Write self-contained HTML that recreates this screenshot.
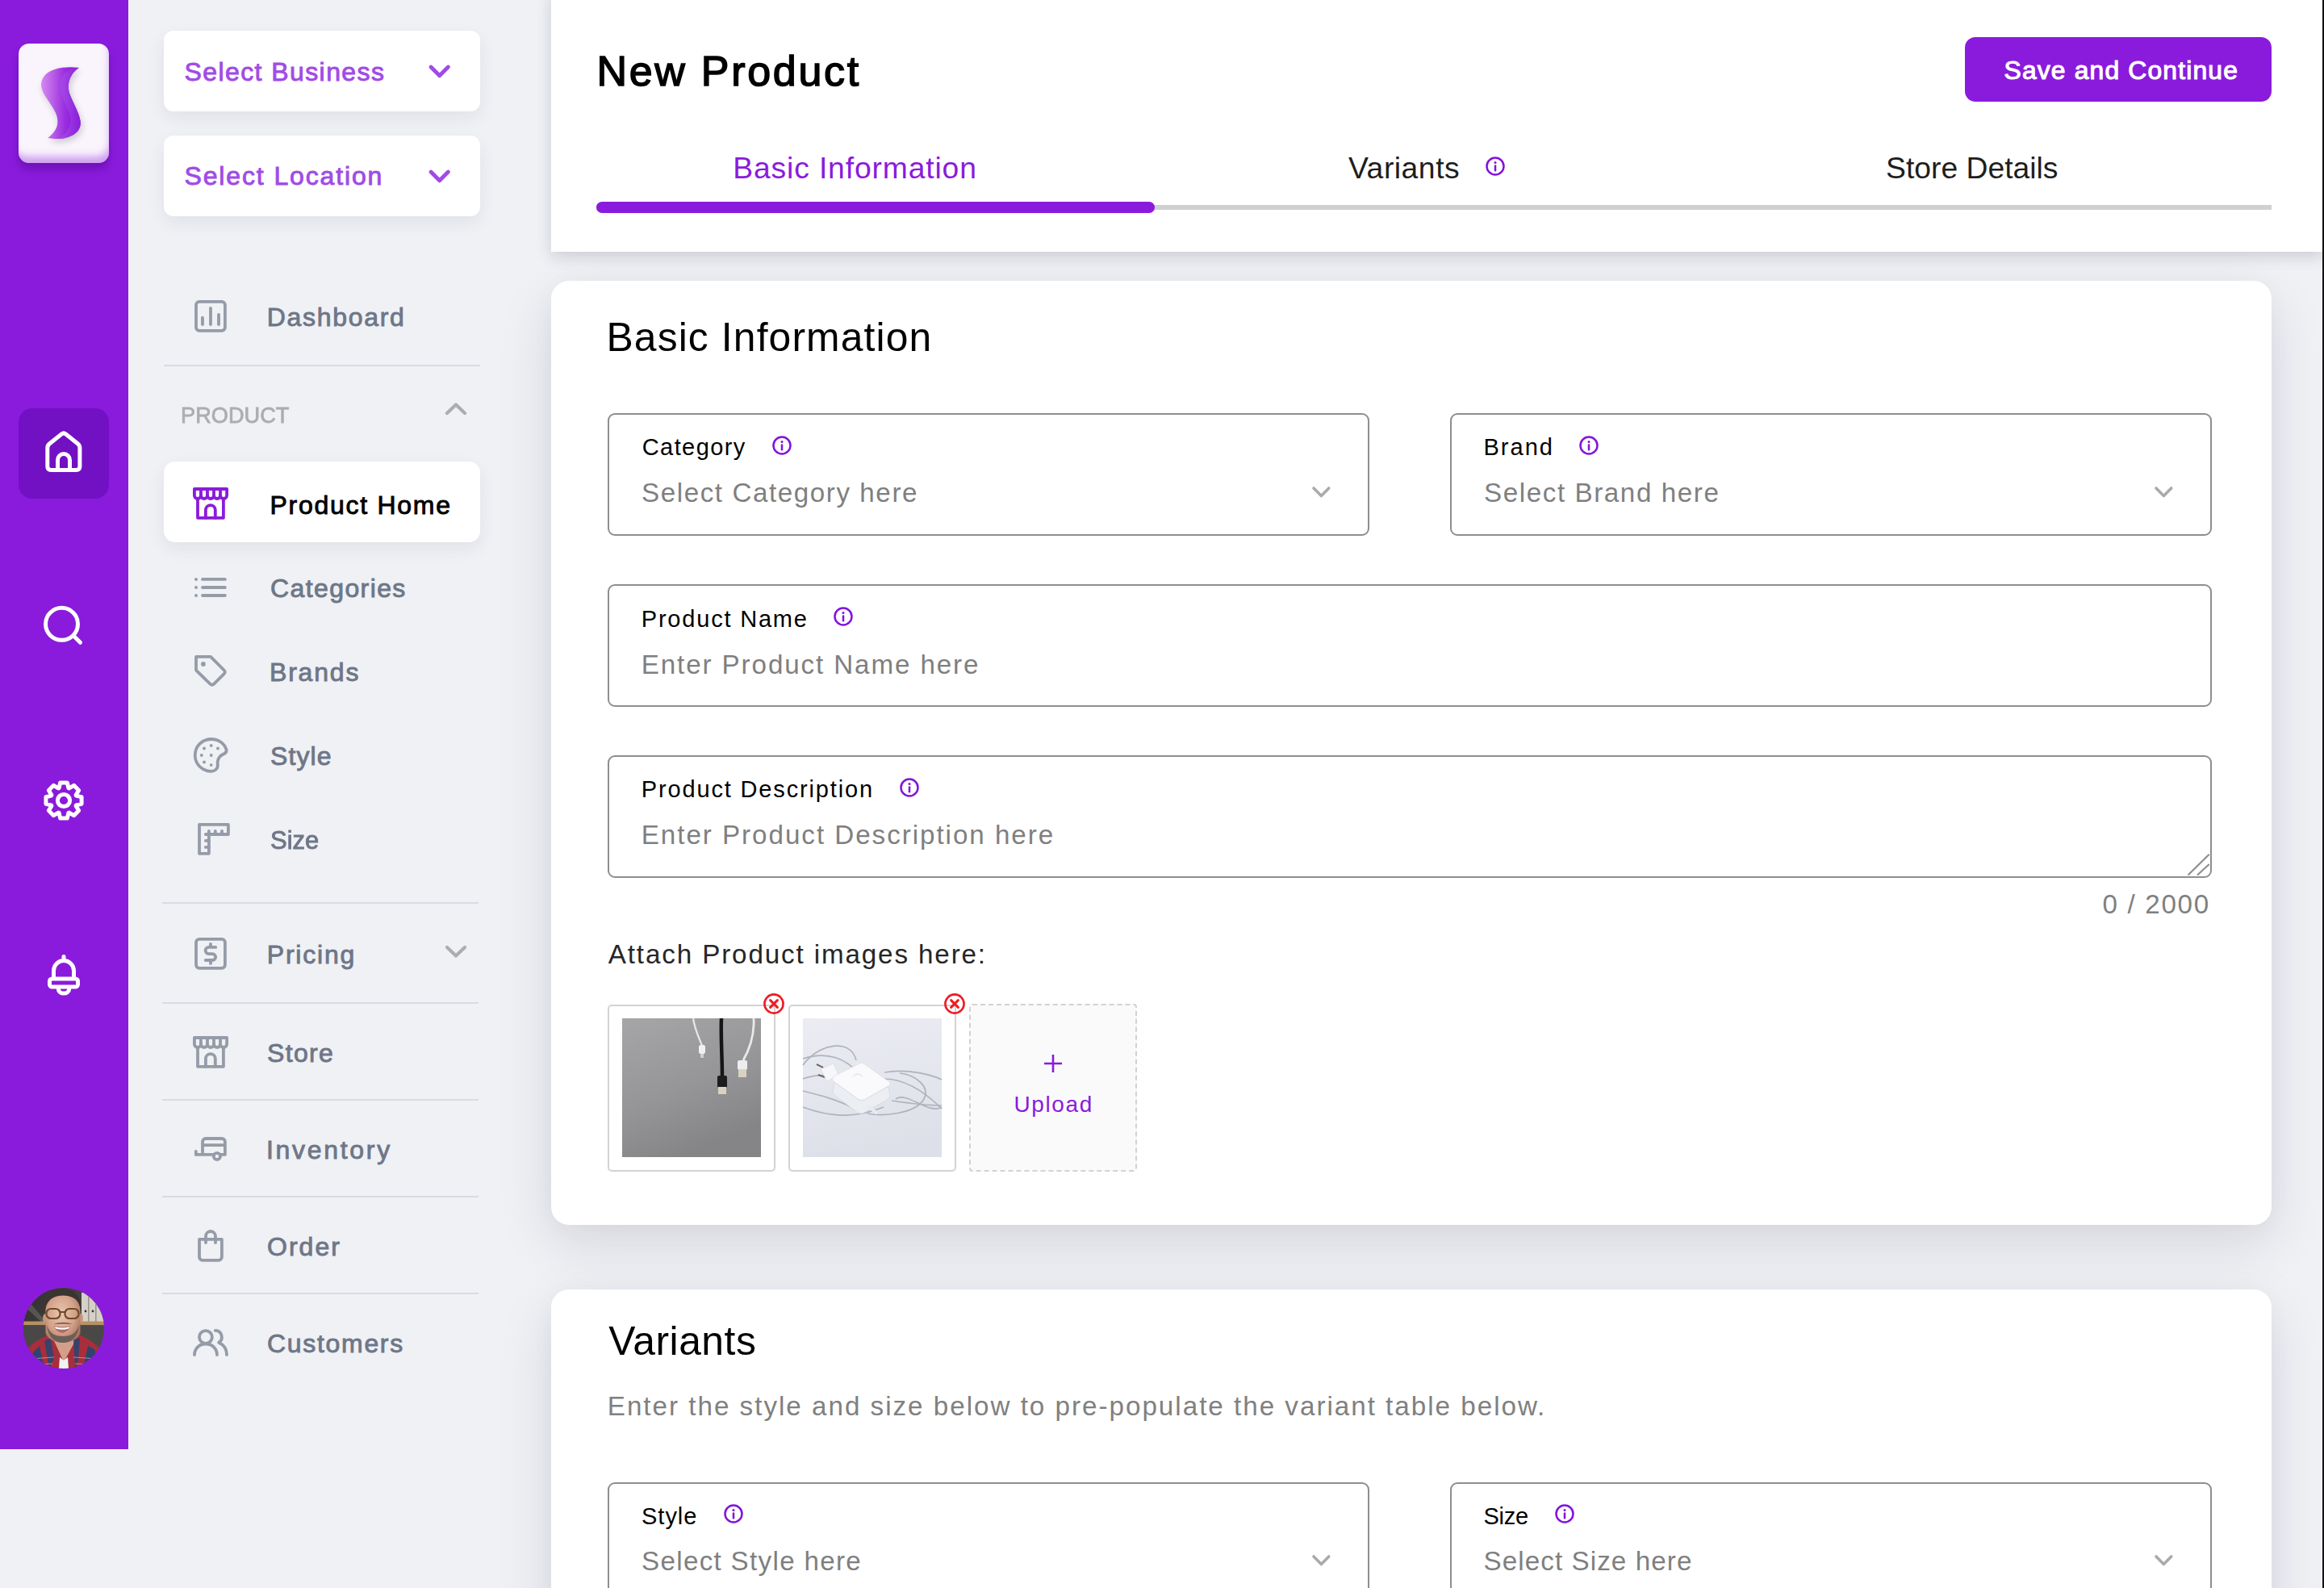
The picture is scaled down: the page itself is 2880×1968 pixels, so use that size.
<!DOCTYPE html><html><head><meta charset="utf-8"><style>
html,body{margin:0;padding:0;}
body{width:2880px;height:1968px;overflow:hidden;background:#F0F1F5;position:relative;font-family:"Liberation Sans",sans-serif;}
.t{position:absolute;white-space:nowrap;font-family:"Liberation Sans",sans-serif;}
.ic{position:absolute;overflow:visible;}
.b{position:absolute;box-sizing:border-box;}
.fld{position:absolute;box-sizing:border-box;border:2px solid #8E8E8E;border-radius:9px;background:#fff;}
.div{position:absolute;height:2px;background:#D9DBE2;}
</style></head><body>
<div class="b" style="left:683px;top:348px;width:2132px;height:1170px;background:#fff;border-radius:22px;box-shadow:0 24px 70px rgba(20,20,50,0.11), 0 4px 30px rgba(20,20,50,0.03)"></div>
<div class="b" style="left:683px;top:1598px;width:2132px;height:600px;background:#fff;border-radius:22px;box-shadow:0 24px 70px rgba(20,20,50,0.11), 0 4px 30px rgba(20,20,50,0.03)"></div>
<div class="b" style="left:683px;top:-10px;width:2196px;height:322px;background:#fff;box-shadow:0 6px 18px rgba(20,20,40,0.16)"></div>
<div class="b" style="left:2878px;top:0;width:2px;height:1968px;background:#111"></div>
<div class="b" style="left:739px;top:254px;width:2076px;height:6px;background:#D0D0D0"></div>
<div class="b" style="left:739px;top:250px;width:692px;height:14px;background:#8A1BDC;border-radius:7px"></div>
<svg class="ic" style="left:1840px;top:193px" width="26" height="26" viewBox="0 0 26 26" fill="none" stroke="#8213DB" stroke-width="2.5" stroke-linecap="round"><circle cx="13" cy="13" r="10.5"/><path d="M13 12.5 V18.3"/><circle cx="13" cy="8.4" r="1.5" fill="#8213DB" stroke="none"/></svg>
<div class="b" style="left:2435px;top:46px;width:380px;height:80px;background:#8A1BDC;border-radius:13px"></div>
<div class="b" style="left:0;top:0;width:159px;height:1796px;background:#8A1BDC"></div>
<div class="b" style="left:23px;top:54px;width:112px;height:148px;background:#FAF4FD;border-radius:13px;box-shadow:inset -3px -12px 10px -4px rgba(170,90,230,0.55), 0 8px 10px rgba(60,0,120,0.35)"></div>
<svg class="ic" style="left:23px;top:54px" width="112" height="148" viewBox="0 0 112 148">
<defs><linearGradient id="lg1" x1="0" y1="0" x2="1" y2="0"><stop offset="0" stop-color="#D58BF0"/><stop offset="0.6" stop-color="#9B2FE0"/><stop offset="1" stop-color="#7A0FD0"/></linearGradient>
<linearGradient id="lg2" x1="0" y1="0" x2="1" y2="0"><stop offset="0" stop-color="#A84BE8"/><stop offset="1" stop-color="#8A1FDA"/></linearGradient>
<filter id="sh" x="-50%" y="-50%" width="200%" height="200%"><feGaussianBlur stdDeviation="4"/></filter></defs>
<path d="M32 40 C40 30 60 28 74 30 C66 36 58 48 64 64 C72 84 86 102 68 113 C56 120 44 118 36 117 C46 110 52 100 46 86 C38 68 20 56 32 40 Z" fill="#000" opacity="0.18" filter="url(#sh)" transform="translate(2,4)"/>
<path d="M32 40 C40 30 60 28 74 30 C66 36 58 48 64 64 C72 84 86 102 68 113 C56 120 44 118 36 117 C46 110 52 100 46 86 C38 68 20 56 32 40 Z" fill="url(#lg1)"/>
<path d="M58 36 C64 31 70 29 75 30 C66 36 58 48 64 64 C72 84 86 102 68 113 C62 116 56 118 50 118 C62 110 68 98 62 84 C54 66 46 48 58 36 Z" fill="url(#lg2)"/>
</svg>
<div class="b" style="left:23px;top:506px;width:112px;height:112px;background:#7210C4;border-radius:17px"></div>
<svg class="ic" style="left:0;top:0" width="159" height="1300" viewBox="0 0 159 1300" fill="none" stroke="#fff" stroke-width="5" stroke-linecap="round" stroke-linejoin="round"><path d="M58.8 578 V555 Q58.8 552 61.2 550 L76.2 538 Q78.9 535.8 81.6 538 L96.5 550 Q98.9 552 98.9 555 V578 Q98.9 582.5 94.4 582.5 H63.3 Q58.8 582.5 58.8 578 Z"/><path d="M71.5 582.5 V570 A7.5 7.5 0 0 1 86.5 570 V582.5"/><circle cx="76.5" cy="773.3" r="20"/><path d="M91.5 788.3 L99.5 796.3"/><path d="M73.09 976.60 L74.71 969.91 L83.29 969.91 L84.91 976.60 L85.71 976.93 L91.58 973.35 L97.65 979.42 L94.07 985.29 L94.40 986.09 L101.09 987.71 L101.09 996.29 L94.40 997.91 L94.07 998.71 L97.65 1004.58 L91.58 1010.65 L85.71 1007.07 L84.91 1007.40 L83.29 1014.09 L74.71 1014.09 L73.09 1007.40 L72.29 1007.07 L66.42 1010.65 L60.35 1004.58 L63.93 998.71 L63.60 997.91 L56.91 996.29 L56.91 987.71 L63.60 986.09 L63.93 985.29 L60.35 979.42 L66.42 973.35 L72.29 976.93 Z"/><circle cx="79" cy="992" r="7.6"/><path d="M79 1185.5 V1188"/><path d="M66.5 1211 V1203 A12.5 12.5 0 0 1 91.5 1203 V1211"/><rect x="61.5" y="1213" width="35" height="10" rx="3"/><path d="M72.3 1225.5 A6.7 5.6 0 0 0 85.7 1225.5"/></svg>
<svg class="ic" style="left:29px;top:1596px" width="100" height="100" viewBox="0 0 100 100">
<defs><clipPath id="av"><circle cx="50" cy="50" r="50"/></clipPath>
<radialGradient id="face" cx="0.45" cy="0.4" r="0.65"><stop offset="0" stop-color="#EBC6B0"/><stop offset="0.6" stop-color="#D4A189"/><stop offset="1" stop-color="#A8735E"/></radialGradient>
<linearGradient id="bgl" x1="0" y1="0" x2="1" y2="0.6"><stop offset="0" stop-color="#2F2D2B"/><stop offset="1" stop-color="#55524F"/></linearGradient></defs>
<g clip-path="url(#av)">
<rect width="100" height="100" fill="url(#bgl)"/>
<path d="M0 22 L22 42 L28 42 L6 16 Z" fill="#777470" opacity="0.5"/>
<rect x="72" y="6" width="28" height="36" fill="#D6D1C7"/>
<rect x="80" y="6" width="1.6" height="36" fill="#9A958C"/><rect x="89" y="6" width="1.6" height="36" fill="#9A958C"/>
<circle cx="77" cy="29" r="1.4" fill="#333"/><circle cx="86" cy="29" r="1.4" fill="#333"/>
<rect x="0" y="41.5" width="100" height="4.8" fill="#B89064"/>
<rect x="0" y="46.3" width="100" height="54" fill="#4A4847"/>
<path d="M30 56 L68 56 L72 90 L28 90 Z" fill="#D2A08A"/>
<path d="M0 100 L0 82 C8 70 20 62 34 58 L40 70 L50 92 L62 70 L66 57 C80 62 92 70 100 82 L100 100 Z" fill="#A82E3C"/>
<path d="M6 100 L12 80 L20 72 L26 100 Z" fill="#2E4470"/><path d="M26 66 L34 62 L38 88 L32 100 Z" fill="#2E4470" opacity="0.9"/>
<path d="M74 100 L80 72 L88 76 L94 100 Z" fill="#2E4470"/><path d="M62 64 L70 62 L68 90 L64 100 Z" fill="#2E4470" opacity="0.9"/>
<path d="M8 88 L38 86 M62 86 L92 88 M10 95 L36 94 M64 94 L92 95" stroke="#D9CCD2" stroke-width="1.1" opacity="0.6"/>
<path d="M44 100 L45 86 L50 90 L55 86 L56 100 Z" fill="#F2F2F2"/>
<ellipse cx="27" cy="38" rx="3" ry="6" fill="#C99580"/><ellipse cx="71" cy="38" rx="3" ry="6" fill="#C99580"/>
<path d="M27.5 30 C27 14 36 8 49 8 C62 8 71 14 70.5 30 L70.5 56 C68 64 58 68 49 68 C40 68 30 64 27.5 56 Z" fill="url(#face)"/>
<path d="M26.5 30 C25 10 35 1 49 1 C63 1 73 10 71.5 30 C70 20 67 10 49 9.5 C32 10 28 20 26.5 30 Z" fill="#3A3531"/>
<path d="M29 46 C30 60 38 68 49 68 C60 68 68 60 69 46 C66 56 60 60 49 60 C38 60 32 56 29 46 Z" fill="#6B5E58"/>
<path d="M38 47 Q49 50 58 47 Q56 55 48 56 Q40 55 38 47 Z" fill="#B06A68"/>
<path d="M39 48 Q49 51 57 48 L56 50.5 Q49 53 40 50.5 Z" fill="#fff"/>
<path d="M37 45 Q49 41 61 45 Q49 44 37 45 Z" fill="#5E4D45"/>
<rect x="28.5" y="26" width="17" height="12" rx="5.5" fill="none" stroke="#6E4A2A" stroke-width="2.2"/>
<rect x="51.5" y="26" width="17" height="12" rx="5.5" fill="none" stroke="#6E4A2A" stroke-width="2.2"/>
<path d="M45.5 30 L51.5 30" stroke="#6E4A2A" stroke-width="1.8"/>
</g></svg>
<div class="b" style="left:203px;top:38px;width:392px;height:100px;background:#fff;border-radius:12px;box-shadow:0 8px 22px rgba(30,30,60,0.07)"></div>
<div class="b" style="left:203px;top:168px;width:392px;height:100px;background:#fff;border-radius:12px;box-shadow:0 8px 22px rgba(30,30,60,0.07)"></div>
<svg class="ic" style="left:530.2px;top:78.6px" width="29.4" height="18.8" fill="none" stroke="#A14BE6" stroke-width="4.8" stroke-linecap="round" stroke-linejoin="round"><path d="M4 4 L14.7 14.8 L25.4 4"/></svg>
<svg class="ic" style="left:530.2px;top:208.6px" width="29.4" height="18.8" fill="none" stroke="#A14BE6" stroke-width="4.8" stroke-linecap="round" stroke-linejoin="round"><path d="M4 4 L14.7 14.8 L25.4 4"/></svg>
<div class="b" style="left:203px;top:572px;width:392px;height:100px;background:#fff;border-radius:14px;box-shadow:0 8px 22px rgba(30,30,60,0.07)"></div>
<svg class="ic" style="left:239px;top:600px" width="44" height="46" viewBox="0 0 44 46" fill="none" stroke="#8A1BDC" stroke-width="3.8" stroke-linecap="round" stroke-linejoin="round"><path d="M1.9 14 V6 H42.1 V14 A4.02 4.02 0 0 1 34.06 14 A4.02 4.02 0 0 1 26.02 14 A4.02 4.02 0 0 1 17.98 14 A4.02 4.02 0 0 1 9.94 14 A4.02 4.02 0 0 1 1.9 14 Z"/><path d="M9.94 6 V14 M17.98 6 V14 M26.02 6 V14 M34.06 6 V14"/><path d="M6 19 V41.8 H37.9 V19"/><path d="M15.9 41.8 V32 A5.95 5.95 0 0 1 27.8 32 V41.8"/></svg>
<div class="div" style="left:203px;top:452px;width:392px"></div>
<div class="div" style="left:201px;top:1118px;width:392px"></div>
<div class="div" style="left:201px;top:1242px;width:392px"></div>
<div class="div" style="left:201px;top:1362px;width:392px"></div>
<div class="div" style="left:201px;top:1482px;width:392px"></div>
<div class="div" style="left:201px;top:1602px;width:392px"></div>
<svg class="ic" style="left:548px;top:494px" width="34" height="26" fill="none" stroke="#ADADAD" stroke-width="4.2" stroke-linecap="round" stroke-linejoin="round"><path d="M6 18 L17 7.5 L28 18"/></svg>
<svg class="ic" style="left:548px;top:1168px" width="34" height="26" fill="none" stroke="#ADADAD" stroke-width="4.2" stroke-linecap="round" stroke-linejoin="round"><path d="M6 6 L17 16.5 L28 6"/></svg>
<svg class="ic" style="left:239px;top:370px" width="44" height="44" viewBox="0 0 44 44" fill="none" stroke="#959CA8" stroke-width="3.8" stroke-linecap="round" stroke-linejoin="round"><rect x="4" y="3.9" width="35.9" height="35.9" rx="4"/><path d="M11.97 23.7 V32 M22 11.8 V32 M32 19.8 V32"/></svg>
<svg class="ic" style="left:239px;top:710px" width="44" height="36" viewBox="0 0 44 36" fill="none" stroke="#959CA8" stroke-width="3.8" stroke-linecap="round" stroke-linejoin="round"><path d="M12 7.9 H39.9 M12 18 H39.9 M12 28 H39.9"/><circle cx="4" cy="7.9" r="2" fill="#959CA8" stroke="none"/><circle cx="4" cy="18" r="2" fill="#959CA8" stroke="none"/><circle cx="4" cy="28" r="2" fill="#959CA8" stroke="none"/></svg>
<svg class="ic" style="left:239px;top:810px" width="44" height="44" viewBox="0 0 44 44" fill="none" stroke="#959CA8" stroke-width="3.8" stroke-linecap="round" stroke-linejoin="round"><path d="M4 3.9 H22 L38.6 20.5 Q40.9 22.8 38.6 25.1 L26.1 37.6 Q23.8 39.9 21.5 37.6 L4 20.6 Z"/><circle cx="12.9" cy="13" r="2.9" fill="#959CA8" stroke="none"/></svg>
<svg class="ic" style="left:239px;top:913px" width="46" height="46" viewBox="0 0 46 46" fill="none" stroke="#959CA8" stroke-width="3.8" stroke-linecap="round" stroke-linejoin="round"><path d="M22.7 3 C11.9 3 2.7 11.5 2.7 23 C2.7 34 11.5 42.8 22.7 42.8 C27 42.8 30.8 40 30.8 35.5 C30.8 33.5 30.2 32 31 29.5 C32 25.5 34.5 23 38 21.5 C40.5 20.5 42 18.5 41.5 16 C39 8 31.5 3 22.7 3 Z"/><circle cx="22.7" cy="10.9" r="1.95" fill="#959CA8" stroke="none"/><circle cx="14" cy="14.5" r="1.95" fill="#959CA8" stroke="none"/><circle cx="31" cy="14.5" r="1.95" fill="#959CA8" stroke="none"/><circle cx="10.8" cy="23" r="1.95" fill="#959CA8" stroke="none"/><circle cx="22.7" cy="23" r="1.95" fill="#959CA8" stroke="none"/><circle cx="14" cy="31.5" r="1.95" fill="#959CA8" stroke="none"/><circle cx="22.7" cy="35.1" r="1.95" fill="#959CA8" stroke="none"/></svg>
<svg class="ic" style="left:239px;top:1018px" width="48" height="44" viewBox="0 0 48 44" fill="none" stroke="#959CA8" stroke-width="3.8" stroke-linecap="round" stroke-linejoin="round"><path d="M8 3.9 H43.9 V16 H19.9 V39.8 H8 Z"/><path d="M19.9 11.8 V16 M27.8 11.8 V16 M36 11.8 V16 M15.9 16 H19.9 M15.9 23.9 H19.9 M15.9 31.9 H19.9"/></svg>
<svg class="ic" style="left:239px;top:1160px" width="44" height="44" viewBox="0 0 44 44" fill="none" stroke="#959CA8" stroke-width="3.8" stroke-linecap="round" stroke-linejoin="round"><rect x="4" y="3.9" width="35.9" height="35.9" rx="4"/><path d="M28.2 13.9 H19.7 A4.1 4.1 0 0 0 19.7 22.1 H24.2 A3.95 3.95 0 0 1 24.2 30 H15.7 M22 9.9 V13.9 M22 30 V33.9"/></svg>
<svg class="ic" style="left:239px;top:1280px" width="44" height="46" viewBox="0 0 44 46" fill="none" stroke="#959CA8" stroke-width="3.8" stroke-linecap="round" stroke-linejoin="round"><path d="M1.9 14 V6 H42.1 V14 A4.02 4.02 0 0 1 34.06 14 A4.02 4.02 0 0 1 26.02 14 A4.02 4.02 0 0 1 17.98 14 A4.02 4.02 0 0 1 9.94 14 A4.02 4.02 0 0 1 1.9 14 Z"/><path d="M9.94 6 V14 M17.98 6 V14 M26.02 6 V14 M34.06 6 V14"/><path d="M6 19 V41.8 H37.9 V19"/><path d="M15.9 41.8 V32 A5.95 5.95 0 0 1 27.8 32 V41.8"/></svg>
<svg class="ic" style="left:239px;top:1405px" width="44" height="36" viewBox="0 0 44 36" fill="none" stroke="#959CA8" stroke-width="3.8" stroke-linecap="round" stroke-linejoin="round"><path d="M3.8 22 V25.9 H39.9 V10 A4 4 0 0 0 35.9 6 H16 A4 4 0 0 0 12 10 V25.9 M12 14.1 H39.9"/><circle cx="29.9" cy="28" r="4.1" fill="#EFF0F4"/></svg>
<svg class="ic" style="left:239px;top:1520px" width="44" height="46" viewBox="0 0 44 46" fill="none" stroke="#959CA8" stroke-width="3.8" stroke-linecap="round" stroke-linejoin="round"><path d="M8 15.9 H35.9 V37.8 A4 4 0 0 1 31.9 41.8 H12 A4 4 0 0 1 8 37.8 Z"/><path d="M16 20 V12 A6 6 0 0 1 28 12 V20"/></svg>
<svg class="ic" style="left:239px;top:1645px" width="46" height="38" viewBox="0 0 46 38" fill="none" stroke="#959CA8" stroke-width="3.8" stroke-linecap="round" stroke-linejoin="round"><circle cx="15.9" cy="12" r="7.95"/><path d="M2 34.1 C2 26 8 20.5 15.95 20.5 C23.9 20.5 29.9 26 29.9 34.1"/><path d="M27.8 3.9 A8.1 8.1 0 0 1 32.1 18.8 C38 21.5 42 27 42 34.1"/></svg>
<div class="fld" style="left:753px;top:512px;width:944px;height:152px"></div>
<div class="fld" style="left:1797px;top:512px;width:944px;height:152px"></div>
<div class="fld" style="left:753px;top:724px;width:1988px;height:152px"></div>
<div class="fld" style="left:753px;top:936px;width:1988px;height:152px"></div>
<svg class="ic" style="left:956px;top:539px" width="26" height="26" viewBox="0 0 26 26" fill="none" stroke="#8213DB" stroke-width="2.5" stroke-linecap="round"><circle cx="13" cy="13" r="10.5"/><path d="M13 12.5 V18.3"/><circle cx="13" cy="8.4" r="1.5" fill="#8213DB" stroke="none"/></svg>
<svg class="ic" style="left:1956px;top:539px" width="26" height="26" viewBox="0 0 26 26" fill="none" stroke="#8213DB" stroke-width="2.5" stroke-linecap="round"><circle cx="13" cy="13" r="10.5"/><path d="M13 12.5 V18.3"/><circle cx="13" cy="8.4" r="1.5" fill="#8213DB" stroke="none"/></svg>
<svg class="ic" style="left:1031.5px;top:750.5px" width="26" height="26" viewBox="0 0 26 26" fill="none" stroke="#8213DB" stroke-width="2.5" stroke-linecap="round"><circle cx="13" cy="13" r="10.5"/><path d="M13 12.5 V18.3"/><circle cx="13" cy="8.4" r="1.5" fill="#8213DB" stroke="none"/></svg>
<svg class="ic" style="left:1114px;top:962.75px" width="26" height="26" viewBox="0 0 26 26" fill="none" stroke="#8213DB" stroke-width="2.5" stroke-linecap="round"><circle cx="13" cy="13" r="10.5"/><path d="M13 12.5 V18.3"/><circle cx="13" cy="8.4" r="1.5" fill="#8213DB" stroke="none"/></svg>
<svg class="ic" style="left:1623.5px;top:601px" width="26.75" height="17.5" fill="none" stroke="#AAAAAA" stroke-width="3.6" stroke-linecap="round" stroke-linejoin="round"><path d="M4 4 L13.375 13.5 L22.75 4"/></svg>
<svg class="ic" style="left:2667.5px;top:601px" width="26.75" height="17.5" fill="none" stroke="#AAAAAA" stroke-width="3.6" stroke-linecap="round" stroke-linejoin="round"><path d="M4 4 L13.375 13.5 L22.75 4"/></svg>
<svg class="ic" style="left:1623.5px;top:1925px" width="26.75" height="17.5" fill="none" stroke="#AAAAAA" stroke-width="3.6" stroke-linecap="round" stroke-linejoin="round"><path d="M4 4 L13.375 13.5 L22.75 4"/></svg>
<svg class="ic" style="left:2667.5px;top:1925px" width="26.75" height="17.5" fill="none" stroke="#AAAAAA" stroke-width="3.6" stroke-linecap="round" stroke-linejoin="round"><path d="M4 4 L13.375 13.5 L22.75 4"/></svg>
<svg class="ic" style="left:2700px;top:1050px" width="50" height="40" fill="none" stroke="#8E8E8E" stroke-width="2.2"><path d="M11.5 34.5 L37.75 8.75 M23 34.5 L37.75 21"/></svg>
<div class="b" style="left:753px;top:1245px;width:208px;height:207px;border:2px solid #D3D3D3;border-radius:5px;background:#fff"></div>
<div class="b" style="left:977px;top:1245px;width:208px;height:207px;border:2px solid #D3D3D3;border-radius:5px;background:#fff"></div>
<svg class="ic" style="left:771px;top:1262px" width="172" height="172" viewBox="0 0 172 172">
<defs><linearGradient id="g1" x1="0" y1="0" x2="0.4" y2="1"><stop offset="0" stop-color="#A6A6A8"/><stop offset="0.6" stop-color="#959597"/><stop offset="1" stop-color="#858587"/></linearGradient></defs>
<rect width="172" height="172" fill="url(#g1)"/>
<path d="M88 0 C90 14 96 26 99 34" stroke="#E8E8E8" stroke-width="2.2" fill="none"/>
<rect x="95" y="33" width="8" height="11" rx="2.5" fill="#F0F0F0"/><rect x="97" y="44" width="4" height="5" fill="#CFCFCF"/>
<path d="M163 0 C164 20 158 38 150 52" stroke="#E8E8E8" stroke-width="2.8" fill="none"/>
<rect x="143" y="52" width="12" height="12" rx="2" fill="#EDEDED"/><rect x="144" y="63" width="10" height="10" fill="#D9D2C2"/>
<path d="M123 0 C122 20 124 50 124 72" stroke="#161616" stroke-width="4.5" fill="none"/>
<rect x="118" y="71" width="12" height="15" rx="2" fill="#1C1C1C"/><rect x="119" y="85" width="10" height="9" fill="#D9D2C2"/>
</svg>
<svg class="ic" style="left:995px;top:1262px" width="172" height="172" viewBox="0 0 172 172">
<defs><linearGradient id="g2" x1="0" y1="0" x2="0.2" y2="1"><stop offset="0" stop-color="#ECEDF3"/><stop offset="1" stop-color="#DEE0E9"/></linearGradient></defs>
<rect width="172" height="172" fill="url(#g2)"/>
<g fill="none" stroke="#AEB3BC" stroke-width="1.7">
<path d="M0 58 C20 30 60 25 66 52"/>
<path d="M0 50 C30 40 55 50 70 70"/>
<path d="M0 75 C20 68 40 70 50 78"/>
<path d="M0 90 C20 95 40 100 60 110"/>
<path d="M0 110 C40 125 70 122 100 110"/>
<path d="M101 67 C130 62 160 70 172 76"/>
<path d="M100 75 C125 75 150 90 172 112"/>
<path d="M115 100 C130 90 155 120 172 110"/>
<path d="M80 118 C100 122 140 118 150 100 C158 85 140 70 120 68"/>
<path d="M110 102 C130 105 155 108 172 108"/>
</g>
<path d="M30 70 L36 60 L38 62 L33 72 Z" fill="#F4F4F6"/>
<path d="M17 57 L25 61 M19 70 L27 73" stroke="#666" stroke-width="2"/>
<path d="M22 63 L38 56 L44 70 L30 78 Z" fill="#F7F7F9" stroke="#D6D8DE" stroke-width="0.6"/>
<path d="M38 72 L70 56 Q73 54.5 76 56.5 L106 78 Q110 81 106 84 L76 101 Q72 103 68 100 L39 79 Q35 76 38 72 Z" fill="#FAFAFC" stroke="#DADDE3" stroke-width="0.7"/>
<path d="M39 79 L68 100 Q72 103 76 101 L106 84 L108 96 Q108 99 104 101 L76 117 Q72 119 68 117 L40 96 Q37 94 37 90 Z" fill="#ECEEF3" stroke="#D3D6DD" stroke-width="0.7"/>
<path d="M62 72 Q68 66 74 72" stroke="#D8DBE1" stroke-width="1" fill="none"/>
<path d="M80 108 L92 118" stroke="#E9EBF0" stroke-width="4"/>
</svg>
<svg class="ic" style="left:943.75px;top:1229px" width="30" height="30" viewBox="0 0 30 30" fill="none" stroke="#EE1C24" stroke-width="2.6" stroke-linecap="round"><circle cx="15" cy="15" r="11.6"/><path d="M10.6 10.6 L19.4 19.4 M19.4 10.6 L10.6 19.4" stroke-width="3"/></svg>
<svg class="ic" style="left:1168px;top:1229px" width="30" height="30" viewBox="0 0 30 30" fill="none" stroke="#EE1C24" stroke-width="2.6" stroke-linecap="round"><circle cx="15" cy="15" r="11.6"/><path d="M10.6 10.6 L19.4 19.4 M19.4 10.6 L10.6 19.4" stroke-width="3"/></svg>
<div class="b" style="left:1201px;top:1244px;width:208px;height:208px;border:2px dashed #D2D2D2;border-radius:4px;background:#FAFAFA"></div>
<svg class="ic" style="left:1290px;top:1303px" width="30" height="30" fill="none" stroke="#8A1BDC" stroke-width="2.6"><path d="M4 15 H26 M15 4 V26"/></svg>
<div class="fld" style="left:753px;top:1837px;width:944px;height:300px"></div>
<div class="fld" style="left:1797px;top:1837px;width:944px;height:300px"></div>
<svg class="ic" style="left:896px;top:1862.75px" width="26" height="26" viewBox="0 0 26 26" fill="none" stroke="#8213DB" stroke-width="2.5" stroke-linecap="round"><circle cx="13" cy="13" r="10.5"/><path d="M13 12.5 V18.3"/><circle cx="13" cy="8.4" r="1.5" fill="#8213DB" stroke="none"/></svg>
<svg class="ic" style="left:1926px;top:1862.75px" width="26" height="26" viewBox="0 0 26 26" fill="none" stroke="#8213DB" stroke-width="2.5" stroke-linecap="round"><circle cx="13" cy="13" r="10.5"/><path d="M13 12.5 V18.3"/><circle cx="13" cy="8.4" r="1.5" fill="#8213DB" stroke="none"/></svg>
<svg class="ic" style="left:1623.5px;top:1925px" width="26.75" height="17.5" fill="none" stroke="#AAAAAA" stroke-width="3.6" stroke-linecap="round" stroke-linejoin="round"><path d="M4 4 L13.375 13.5 L22.75 4"/></svg>
<svg class="ic" style="left:2667.5px;top:1925px" width="26.75" height="17.5" fill="none" stroke="#AAAAAA" stroke-width="3.6" stroke-linecap="round" stroke-linejoin="round"><path d="M4 4 L13.375 13.5 L22.75 4"/></svg>
<div class="t" style="left:228.50px;top:73px;font-size:32px;line-height:32px;letter-spacing:1.414px;color:#A14BE6;-webkit-text-stroke:0.9px #A14BE6;">Select Business</div>
<div class="t" style="left:228.50px;top:202px;font-size:32px;line-height:32px;letter-spacing:1.864px;color:#A14BE6;-webkit-text-stroke:0.9px #A14BE6;">Select Location</div>
<div class="t" style="left:739.50px;top:62px;font-size:52px;line-height:52px;letter-spacing:2.700px;color:#000;-webkit-text-stroke:1.5px #000;">New Product</div>
<div class="t" style="left:908.25px;top:190px;font-size:37.3px;line-height:37.3px;letter-spacing:0.844px;color:#8A1BDC;">Basic Information</div>
<div class="t" style="left:1671.00px;top:190px;font-size:37.3px;line-height:37.3px;letter-spacing:0.514px;color:#1E1E1E;">Variants</div>
<div class="t" style="left:2337.00px;top:190px;font-size:37.3px;line-height:37.3px;letter-spacing:0.000px;color:#1E1E1E;">Store Details</div>
<div class="t" style="left:2483.50px;top:72px;font-size:31.8px;line-height:31.8px;letter-spacing:1.181px;color:#fff;-webkit-text-stroke:1.1px #fff;">Save and Continue</div>
<div class="t" style="left:330.75px;top:377px;font-size:32px;line-height:32px;letter-spacing:1.688px;color:#6E7788;-webkit-text-stroke:0.9px #6E7788;">Dashboard</div>
<div class="t" style="left:224.00px;top:501px;font-size:28px;line-height:28px;letter-spacing:0.000px;color:#ADADAD;-webkit-text-stroke:0.8px #ADADAD;transform:scaleX(0.9706);transform-origin:0 0;">PRODUCT</div>
<div class="t" style="left:334.50px;top:610px;font-size:32px;line-height:32px;letter-spacing:1.718px;color:#000;-webkit-text-stroke:0.9px #000;">Product Home</div>
<div class="t" style="left:335.00px;top:713px;font-size:32px;line-height:32px;letter-spacing:1.400px;color:#6E7788;-webkit-text-stroke:0.9px #6E7788;">Categories</div>
<div class="t" style="left:334.00px;top:817px;font-size:32px;line-height:32px;letter-spacing:1.800px;color:#6E7788;-webkit-text-stroke:0.9px #6E7788;">Brands</div>
<div class="t" style="left:335.00px;top:921px;font-size:32px;line-height:32px;letter-spacing:1.125px;color:#6E7788;-webkit-text-stroke:0.9px #6E7788;">Style</div>
<div class="t" style="left:335.00px;top:1025px;font-size:32px;line-height:32px;letter-spacing:0.000px;color:#6E7788;-webkit-text-stroke:0.9px #6E7788;transform:scaleX(0.9673);transform-origin:0 0;">Size</div>
<div class="t" style="left:330.75px;top:1167px;font-size:32px;line-height:32px;letter-spacing:1.800px;color:#6E7788;-webkit-text-stroke:0.9px #6E7788;">Pricing</div>
<div class="t" style="left:331.00px;top:1289px;font-size:32px;line-height:32px;letter-spacing:1.350px;color:#6E7788;-webkit-text-stroke:0.9px #6E7788;">Store</div>
<div class="t" style="left:330.00px;top:1409px;font-size:32px;line-height:32px;letter-spacing:2.700px;color:#6E7788;-webkit-text-stroke:0.9px #6E7788;">Inventory</div>
<div class="t" style="left:331.00px;top:1529px;font-size:32px;line-height:32px;letter-spacing:2.025px;color:#6E7788;-webkit-text-stroke:0.9px #6E7788;">Order</div>
<div class="t" style="left:331.00px;top:1649px;font-size:32px;line-height:32px;letter-spacing:1.688px;color:#6E7788;-webkit-text-stroke:0.9px #6E7788;">Customers</div>
<div class="t" style="left:751.50px;top:394px;font-size:49.8px;line-height:49.8px;letter-spacing:1.125px;color:#000;">Basic Information</div>
<div class="t" style="left:795.75px;top:540px;font-size:29px;line-height:29px;letter-spacing:1.414px;color:#000;">Category</div>
<div class="t" style="left:795.00px;top:594px;font-size:33.2px;line-height:33.2px;letter-spacing:1.563px;color:#7F7F7F;">Select Category here</div>
<div class="t" style="left:1838.50px;top:540px;font-size:29px;line-height:29px;letter-spacing:2.025px;color:#000;">Brand</div>
<div class="t" style="left:1839.00px;top:594px;font-size:33.2px;line-height:33.2px;letter-spacing:1.575px;color:#7F7F7F;">Select Brand here</div>
<div class="t" style="left:794.75px;top:753px;font-size:29px;line-height:29px;letter-spacing:1.800px;color:#000;">Product Name</div>
<div class="t" style="left:794.75px;top:807px;font-size:33.2px;line-height:33.2px;letter-spacing:1.882px;color:#7F7F7F;">Enter Product Name here</div>
<div class="t" style="left:794.75px;top:964px;font-size:29px;line-height:29px;letter-spacing:1.850px;color:#000;">Product Description</div>
<div class="t" style="left:794.75px;top:1018px;font-size:33.2px;line-height:33.2px;letter-spacing:1.955px;color:#7F7F7F;">Enter Product Description here</div>
<div class="t" style="left:2605.50px;top:1104px;font-size:33.2px;line-height:33.2px;letter-spacing:1.671px;color:#7F7F7F;">0 / 2000</div>
<div class="t" style="left:753.75px;top:1166px;font-size:33.2px;line-height:33.2px;letter-spacing:1.869px;color:#262626;">Attach Product images here:</div>
<div class="t" style="left:1256.50px;top:1355px;font-size:28px;line-height:28px;letter-spacing:1.620px;color:#8A1BDC;">Upload</div>
<div class="t" style="left:754.25px;top:1638px;font-size:49.8px;line-height:49.8px;letter-spacing:0.514px;color:#000;">Variants</div>
<div class="t" style="left:752.75px;top:1726px;font-size:33.2px;line-height:33.2px;letter-spacing:1.993px;color:#808080;">Enter the style and size below to pre-populate the variant table below.</div>
<div class="t" style="left:795.00px;top:1865px;font-size:29px;line-height:29px;letter-spacing:0.990px;color:#000;">Style</div>
<div class="t" style="left:795.00px;top:1918px;font-size:33.2px;line-height:33.2px;letter-spacing:1.305px;color:#7F7F7F;">Select Style here</div>
<div class="t" style="left:1838.50px;top:1865px;font-size:29px;line-height:29px;letter-spacing:-0.300px;color:#000;">Size</div>
<div class="t" style="left:1838.50px;top:1918px;font-size:33.2px;line-height:33.2px;letter-spacing:1.080px;color:#7F7F7F;">Select Size here</div>
<script>(function(){var w=window.innerWidth;if(w&&Math.abs(w-2880)>2){document.body.style.zoom=(w/2880);}})();</script>
</body></html>
